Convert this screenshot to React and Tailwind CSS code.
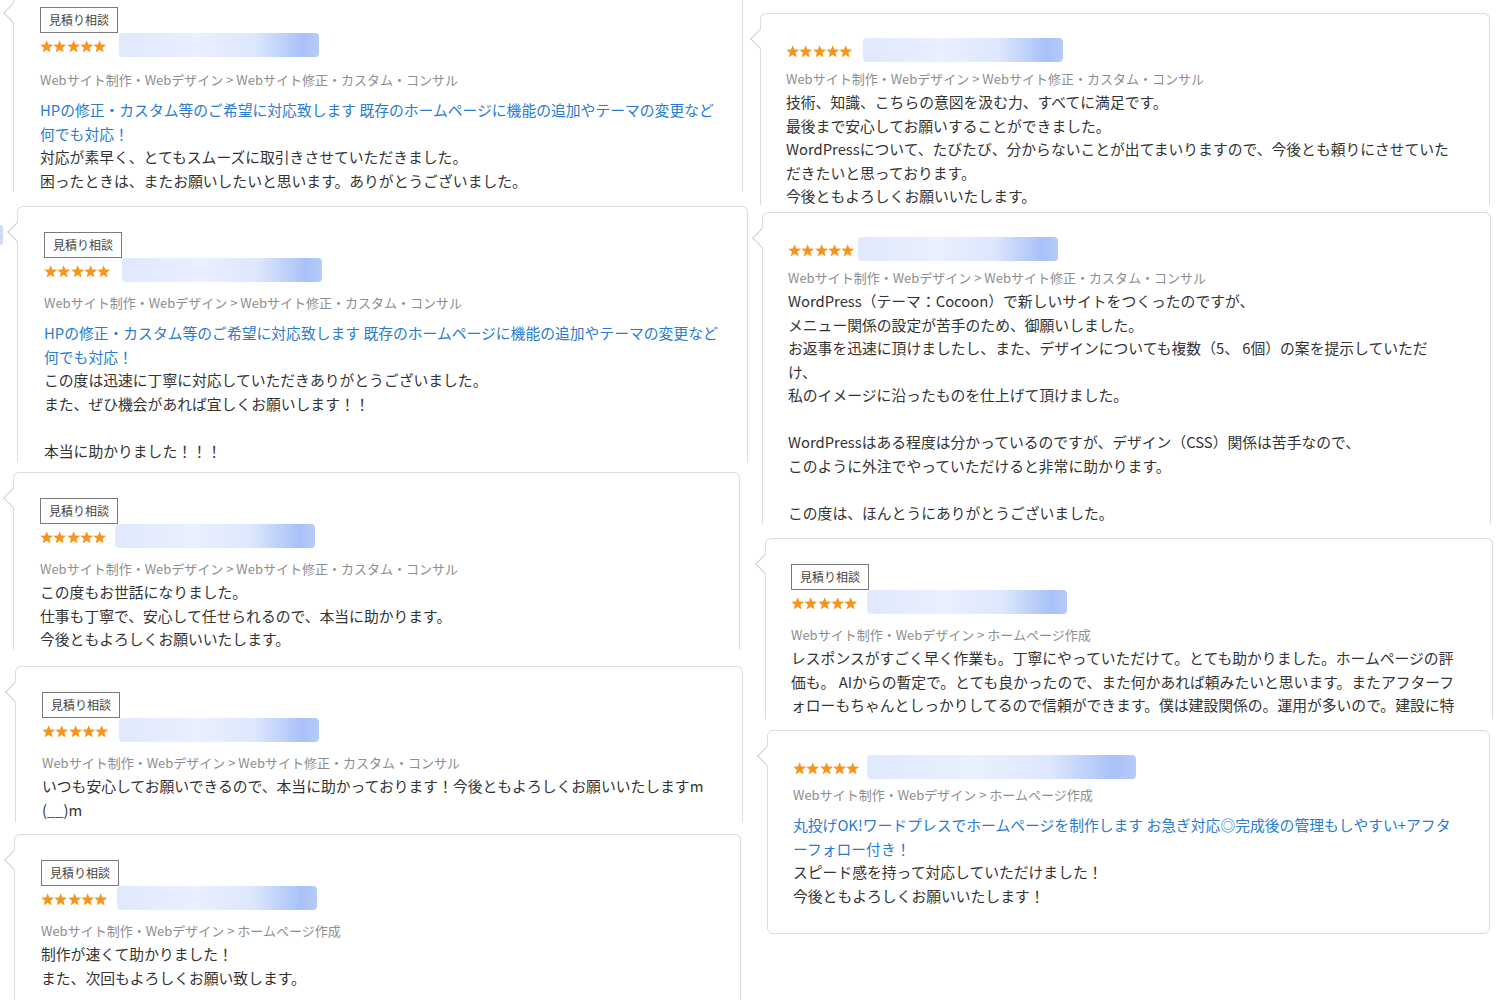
import React from "react";

const CAT1 = "Webサイト制作・Webデザイン > Webサイト修正・カスタム・コンサル";
const CAT2 = "Webサイト制作・Webデザイン > ホームページ作成";
const TITLE1 = [
  "HPの修正・カスタム等のご希望に対応致します 既存のホームページに機能の追加やテーマの変更など",
  "何でも対応！",
];

function Star() {
  return (
    <svg width="13.3" height="12.8" viewBox="0 0 24 23" className="shrink-0">
      <polygon
        fill="#f7941d"
        points="12,0.2 15.06,8.29 23.7,8.7 16.95,14.11 19.23,22.45 12,17.7 4.77,22.45 7.05,14.11 0.3,8.7 8.94,8.29"
      />
    </svg>
  );
}

function Card({
  outer,
  box,
  pad,
  notch = "top-[19px]",
  badge,
  barCls,
  catMt = "mt-[10px]",
  category,
  title = [],
  body = [],
  avatar,
}) {
  return (
    <div className={"relative shrink-0 " + outer}>
      <div className={"h-full overflow-hidden bg-white " + box}>
        <div className={"pt-[24px] " + pad}>
          {badge && (
            <div>
              <span className="inline-flex items-center h-[26px] px-[8px] border border-[#7a7a7a] text-[12px] leading-none text-[#444]">
                見積り相談
              </span>
            </div>
          )}
          <div className="flex items-center h-[24px]">
            <div className="flex translate-y-[1px]">
              <Star />
              <Star />
              <Star />
              <Star />
              <Star />
            </div>
            <div
              className={
                "h-[24px] rounded-[4px] bg-[linear-gradient(90deg,#e0e9fd_0%,#e9f0fe_40%,#dde7fd_68%,#a8c1f8_92%,#b6cbf9_100%)] " +
                barCls
              }
            />
          </div>
          <div
            className={
              "text-[13px] leading-[22px] text-[#8e8e8e] whitespace-nowrap " + catMt
            }
          >
            {category}
          </div>
          {title.length > 0 && (
            <div className="mt-[7px]">
              {title.map((t, i) => (
                <div
                  key={i}
                  className="text-[14.8px] leading-[23.5px] text-[#2b7bd0] whitespace-nowrap"
                >
                  {t}
                </div>
              ))}
            </div>
          )}
          <div>
            {body.map((t, i) =>
              t === "" ? (
                <div key={i} className="h-[23.5px]" />
              ) : (
                <div
                  key={i}
                  className="text-[14.8px] leading-[23.5px] text-[#333] whitespace-nowrap"
                >
                  {t}
                </div>
              )
            )}
          </div>
        </div>
      </div>
      <div
        className={
          "absolute left-[-7px] w-[14px] h-[14px] bg-white border-l border-b border-[#cfcfcf] rotate-45 " +
          notch
        }
      />
      {avatar && (
        <div className="absolute left-[-17px] top-[19px] w-[3px] h-[20px] rounded-r-full bg-[#cddbf6]" />
      )}
    </div>
  );
}

const OPEN = "border-x border-t border-[#dcdcdc] rounded-t-[6px]";

export default function App() {
  return (
    <div className="w-[1500px] h-[1000px] overflow-hidden bg-white flex font-['Noto_Sans_CJK_JP','Noto_Sans',sans-serif]">
      {/* left column */}
      <div className="w-[750px] shrink-0 flex flex-col">
        <Card
          outer="mt-[-18px] ml-[13px] w-[730px] h-[210px]"
          box="border-x border-[#dcdcdc]"
          pad="pl-[26px]"
          notch="top-[24px]"
          badge
          barCls="ml-[13px] w-[200px]"
          catMt="mt-[12px]"
          category={CAT1}
          title={TITLE1}
          body={[
            "対応が素早く、とてもスムーズに取引きさせていただきました。",
            "困ったときは、またお願いしたいと思います。ありがとうございました。",
          ]}
        />
        <Card
          outer="mt-[14px] ml-[17px] w-[731px] h-[256px]"
          box={OPEN}
          pad="pl-[26px]"
          badge
          avatar
          barCls="ml-[12px] w-[200px]"
          category={CAT1}
          title={TITLE1}
          body={[
            "この度は迅速に丁寧に対応していただきありがとうございました。",
            "また、ぜひ機会があれば宜しくお願いします！！",
            "",
            "本当に助かりました！！！",
          ]}
        />
        <Card
          outer="mt-[10px] ml-[13px] w-[727px] h-[178px]"
          box={OPEN}
          pad="pl-[26px]"
          badge
          barCls="ml-[9px] w-[200px]"
          category={CAT1}
          body={[
            "この度もお世話になりました。",
            "仕事も丁寧で、安心して任せられるので、本当に助かります。",
            "今後ともよろしくお願いいたします。",
          ]}
        />
        <Card
          outer="mt-[16px] ml-[15px] w-[728px] h-[156px]"
          box={OPEN}
          pad="pl-[26px]"
          badge
          barCls="ml-[11px] w-[200px]"
          category={CAT1}
          body={[
            "いつも安心してお願いできるので、本当に助かっております！今後ともよろしくお願いいたしますm",
            "(__)m",
          ]}
        />
        <Card
          outer="mt-[12px] ml-[14px] w-[727px] h-[200px]"
          box={OPEN}
          pad="pl-[26px]"
          badge
          barCls="ml-[10px] w-[200px]"
          category={CAT2}
          body={["制作が速くて助かりました！", "また、次回もよろしくお願い致します。"]}
        />
      </div>

      {/* right column */}
      <div className="flex-1 flex flex-col">
        <Card
          outer="mt-[13px] ml-[10px] w-[730px] h-[192px]"
          box={OPEN}
          pad="pl-[25px]"
          barCls="ml-[11px] w-[200px]"
          catMt="mt-[6px]"
          category={CAT1}
          body={[
            "技術、知識、こちらの意図を汲む力、すべてに満足です。",
            "最後まで安心してお願いすることができました。",
            "WordPressについて、たびたび、分からないことが出てまいりますので、今後とも頼りにさせていた",
            "だきたいと思っております。",
            "今後ともよろしくお願いいたします。",
          ]}
        />
        <Card
          outer="mt-[7px] ml-[12px] w-[729px] h-[312px]"
          box={OPEN}
          pad="pl-[25px]"
          barCls="ml-[4px] w-[200px]"
          catMt="mt-[6px]"
          category={CAT1}
          body={[
            "WordPress（テーマ：Cocoon）で新しいサイトをつくったのですが、",
            "メニュー関係の設定が苦手のため、御願いしました。",
            "お返事を迅速に頂けましたし、また、デザインについても複数（5、 6個）の案を提示していただ",
            "け、",
            "私のイメージに沿ったものを仕上げて頂けました。",
            "",
            "WordPressはある程度は分かっているのですが、デザイン（CSS）関係は苦手なので、",
            "このように外注でやっていただけると非常に助かります。",
            "",
            "この度は、ほんとうにありがとうございました。",
          ]}
        />
        <Card
          outer="mt-[14px] ml-[15px] w-[728px] h-[181px]"
          box={OPEN}
          pad="pl-[25px]"
          badge
          barCls="ml-[10px] w-[200px]"
          category={CAT2}
          body={[
            "レスポンスがすごく早く作業も。丁寧にやっていただけて。とても助かりました。ホームページの評",
            "価も。 AIからの暫定で。とても良かったので、また何かあれば頼みたいと思います。またアフターフ",
            "ォローもちゃんとしっかりしてるので信頼ができます。僕は建設関係の。運用が多いので。建設に特",
          ]}
        />
        <Card
          outer="mt-[11px] ml-[17px] w-[723px] h-[204px]"
          box="border border-[#dcdcdc] rounded-[6px]"
          pad="pl-[25px]"
          barCls="ml-[8px] w-[269px]"
          catMt="mt-[5px]"
          category={CAT2}
          title={[
            "丸投げOK!ワードプレスでホームページを制作します お急ぎ対応◎完成後の管理もしやすい+アフタ",
            "ーフォロー付き！",
          ]}
          body={["スピード感を持って対応していただけました！", "今後ともよろしくお願いいたします！"]}
        />
      </div>
    </div>
  );
}
